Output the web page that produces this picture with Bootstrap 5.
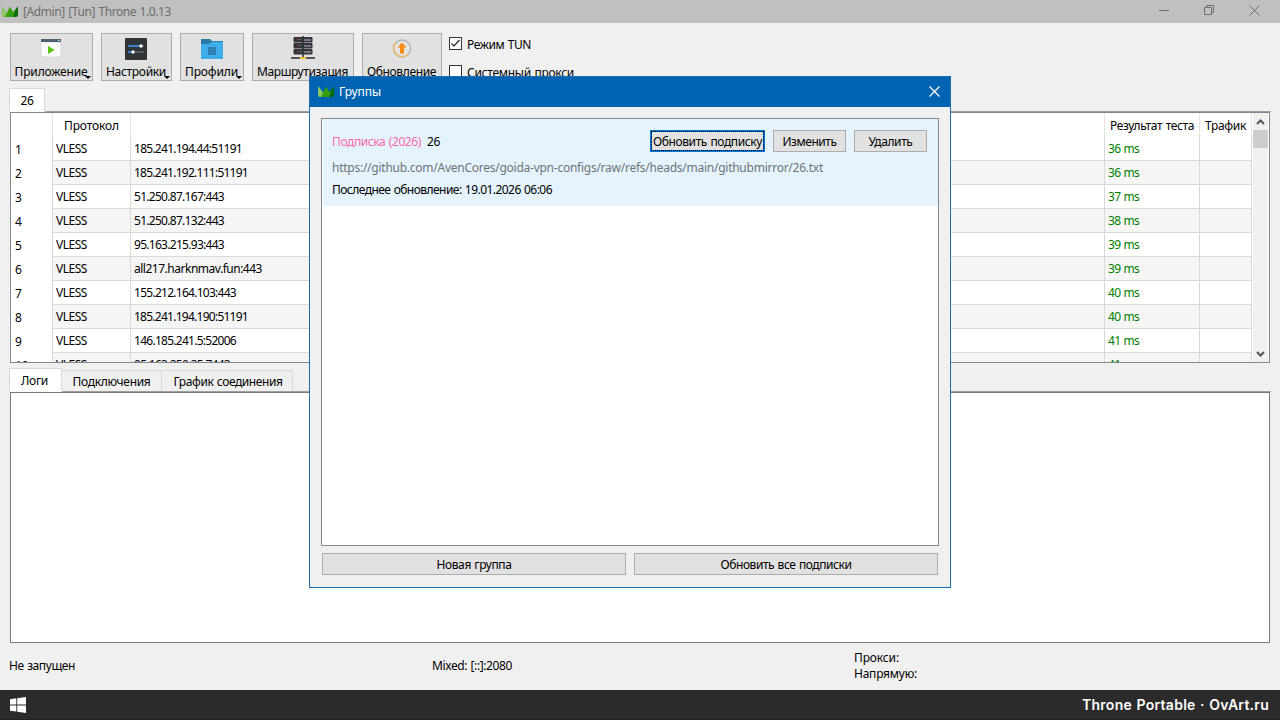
<!DOCTYPE html>
<html lang="ru">
  <head>
    <meta charset="UTF-8" />
    <meta name="viewport" content="width=device-width, initial-scale=1.0" />
    <title>Throne 1.0.13</title>
    <link
      href="https://cdn.jsdelivr.net/npm/bootstrap@5.3.0/dist/css/bootstrap.min.css"
      rel="stylesheet"
    />
    <style>
      body {
        width: 1280px;
        height: 720px;
        overflow: hidden;
        background: #f0f0f0;
        color: #000;
        font: 12px/16px "Noto Sans", "Open Sans", sans-serif;
        word-spacing: 0.7px;
      }
      svg { display: block; flex: none; }
      [data-w] { display: inline-block; white-space: nowrap; }

      .title-bar { height: 23px; background: #c0c0c0; color: #6d6d6d; padding-left: 2px; }
      .title-bar .caption { margin-left: 5px; }
      .win-btns { gap: 34px; padding: 0 20px 2px 0; }

      .tools { height: 65px; padding: 10px 10px 0; gap: 8px; }
      .tool-btn, .flat-btn {
        background: #e1e1e1;
        border: 1px solid #adadad;
        border-radius: 0;
        color: #000;
        padding: 0;
        font-size: 12px;
        line-height: 16px;
        word-spacing: inherit;
      }
      .tool-btn { height: 48px; position: relative; padding: 1px 1px 0 0; }
      .tool-btn svg { margin: 0 auto 4px; }
      .tool-btn.has-menu::after {
        content: "";
        position: absolute;
        right: 1px;
        bottom: 1px;
        border: 3px solid transparent;
        border-top-color: #000;
        border-bottom: 0;
      }
      .w-app { width: 83px; }
      .w-set { width: 71px; }
      .w-prof { width: 64px; }
      .w-route { width: 102px; }
      .w-upd { width: 80px; }
      .checks { padding-top: 4px; margin-left: -1px; gap: 12px; }
      .check-row { height: 16px; gap: 5px; }
      .box { width: 13px; height: 13px; border: 1px solid #333; background: #fff; margin-top: -3px; }

      .tab-top { width: 36px; height: 23px; margin-left: 9px; background: #fff; border: 1px solid #d9d9d9; border-bottom: 0; padding-top: 4px; }
      .rule-top { height: 1px; margin: 0 9px 0 45px; background: #a0a0a0; }
      .rule-wrap { background: linear-gradient(#fff, #fff) 10px 0 / 34px 1px no-repeat; }

      .grid-frame { margin: 0 10px; height: 251px; border: 1px solid #828790; background: #fff; overflow: hidden; }
      .grid-head { height: 24px; line-height: 25px; }
      .grid-head > div, .grid-line > div { border-right: 1px solid #d9d9d9; }
      .grid-head > div { border-color: #e5e5e5; text-align: center; }
      .grid-line { height: 24px; line-height: 24px; }
      .grid-line > div { border-bottom: 1px solid #d9d9d9; padding-left: 3px; height: 24px; overflow: hidden; }
      .grid-line [data-w], .grid-head [data-w] { line-height: inherit; vertical-align: top; }
      .grid-line:nth-child(even) > div { background: #f5f5f5; }
      .grid-line > .c-num, .grid-line:nth-child(even) > .c-num { background: #fff; border-bottom: 0; line-height: 26px; padding-left: 4px; }
      .c-num { width: 42px; }
      .c-proto { width: 78px; }
      .c-addr { width: 974px; }
      .c-res { width: 95px; }
      .c-traf { width: 52px; }
      .ms { color: #008000; }
      .scroll-bar { width: 15px; margin-left: auto; background: #f0f0f0; margin-right: 1px; }
      .thumb { height: 18px; background: #cdcdcd; }

      .log-tabs { height: 28px; padding-left: 9px; align-items: flex-end; }
      .log-tab { height: 21px; border: 1px solid #d9d9d9; border-left: 0; border-bottom: 0; background: #f0f0f0; text-align: center; padding-top: 3px; }
      .log-tab.current { width: 53px; height: 23px; background: #fff; border-left: 1px solid #d9d9d9; padding: 4px 2px 0 0; }
      .log-wrap { background: linear-gradient(#fff, #fff) 10px 0 / 51px 1px no-repeat; }
      .log-rule { height: 1px; margin: 0 9px 0 62px; background: #a0a0a0; }
      .w-conn { width: 100px; }
      .w-graph { width: 131px; padding-left: 2px; }
      .log-panel { margin: 0 10px; height: 251px; border: 1px solid #7a7a7a; background: #fff; }

      .status { height: 47px; padding: 0 0 2px 9px; }
      .status > div { width: 422px; }
      .status .mid, .status .traffic { padding-left: 1px; }

      .task-bar { height: 30px; background: #2b2b2b; border-bottom: 1px solid #241f24; padding: 0 11px 0 10px; color: #fff; }
      .sign { font: 600 14px/20px Inter, sans-serif; }

      .dialog-win { position: absolute; left: 309px; top: 76px; width: 642px; height: 512px; border: 1px solid #1a6fb0; background: #f0f0f0; }
      .dialog-title { height: 30px; background: #0063b1; color: #fff; padding: 0 10px 1px 8px; }
      .dialog-title .caption { margin-left: 5px; padding-top: 1px; }
      .group-list { margin: 11px 11px 0; height: 428px; border: 1px solid #828790; background: #fff; }
      .group-item { height: 87px; background: #e5f3ff; margin: 0 0 0 1px; padding: 11px 11px 0 9px; }
      .group-name { padding: 1px 0 0 6px; }
      .flat-btn { height: 22px; width: 73px; }
      .flat-btn [data-w] { line-height: 20px; vertical-align: top; padding-top: 1px; }
      .flat-btn.focused { width: 115px; border: 2px solid #0078d7; outline: 1px dotted #000; outline-offset: -2px; }
      .flat-btn.focused [data-w] { line-height: 18px; }
      .dialog-foot { margin: 7px 12px 0; }
      .pink { color: #ff69a5; padding-top: 1px; }
      .url { color: #6f7478; margin-top: 8px; }
      .updated { margin-top: 6px; }
    </style>
  </head>
  <body class="d-flex flex-column">
    <svg width="0" height="0" class="position-absolute">
      <symbol id="crown" viewBox="0 0 16 11">
        <path fill="#8ac763" d="M0 0 6.500 8 6 11H2Q0 11 0 9z" />
        <path fill="#0b6a0b" d="M16 0v9q0 2-2 2h-4L11 7z" />
        <path fill="#36a009" d="M3 11 8 .5 11 6l2.500-2.500L11 11z" />
      </symbol>
    </svg>

    <header class="title-bar d-flex align-items-center">
      <svg width="16" height="11"><use href="#crown" /></svg>
      <span class="caption" data-w="148">[Admin] [Tun] Throne 1.0.13</span>
      <div class="win-btns d-flex ms-auto align-items-center">
        <svg width="11" height="11" stroke="#6d6d6d"><path d="M0 5.500h10" /></svg>
        <svg width="11" height="11" fill="none" stroke="#6d6d6d"><path d="M.5 2.500h7v7h-7zM2.500 2.500v-2h7v7h-2" /></svg>
        <svg width="11" height="11" stroke="#6d6d6d"><path d="M.5.5l10 10M10.500.5l-10 10" /></svg>
      </div>
    </header>

    <div class="tools d-flex">
      <button class="tool-btn has-menu w-app">
        <svg width="24" height="24" viewBox="0 0 24 24">
          <path fill="#fafafa" stroke="#ccc" stroke-width=".6" d="M2 6h20v15H2z" />
          <path fill="#4b6270" d="M2 3h20v3H2z" />
          <path fill="#9ddcf0" d="M19 4h2v1h-2z" />
          <path fill="#5cc40d" d="M9 10l6.500 4L9 18z" />
        </svg>
        <span data-w="73">Приложение</span>
      </button>
      <button class="tool-btn has-menu w-set">
        <svg width="24" height="24" viewBox="0 0 24 24">
          <rect x="1" y="2" width="22" height="22" rx="1" fill="#30353a" />
          <path stroke="#555b60" stroke-width="2" d="M4 10h16M4 16h16" />
          <path stroke="#3b80c9" stroke-width="2" d="M4 10h12M4 16h4" />
          <circle cx="17" cy="10" r="1.700" fill="#fff" /><circle cx="9" cy="16" r="1.700" fill="#fff" />
        </svg>
        <span data-w="60">Настройки</span>
      </button>
      <button class="tool-btn has-menu w-prof">
        <svg width="24" height="24" viewBox="0 0 24 24">
          <path fill="#2a7ba6" d="M1 3h9l2 2h11v6H1z" />
          <path fill="#3daee9" d="M1 8h8l3-2h11v17H1z" />
          <path fill="#2b7ca8" d="M8 11h8v8H8z" />
          <path stroke="#3392c4" stroke-width=".5" d="M10.500 11v8M13.500 11v8M8 13.500h8M8 16.500h8" />
        </svg>
        <span data-w="53">Профили</span>
      </button>
      <button class="tool-btn w-route">
        <svg width="26" height="24" viewBox="0 0 26 24">
          <path fill="#55555d" d="M12 0h2v22h-2z" />
          <path fill="#33343b" d="M3.500 2q0-1 1-1h17q1 0 1 1v3.500q0 1-1 1h-17q-1 0-1-1zM3.500 8q0-1 1-1h17q1 0 1 1v3.500q0 1-1 1h-17q-1 0-1-1zM3.500 14q0-1 1-1h17q1 0 1 1v3.500q0 1-1 1h-17q-1 0-1-1z" />
          <path stroke="#777783" stroke-width="2" d="M14 4h7M14 10h7M14 16h7" />
          <path stroke="#a33b55" d="M7 3.500h2M7 9.500h2M7 15.500h2" />
          <path stroke="#5a9b62" d="M10 3.500h1M10 9.500h1M10 15.500h1" />
          <path stroke="#55555d" stroke-width="2" d="M1 22h24" />
          <path fill="#efbd25" d="M10 21h6v2h-6z" />
        </svg>
        <span data-w="91">Маршрутизация</span>
      </button>
      <button class="tool-btn w-upd">
        <svg width="24" height="24" viewBox="0 0 24 24">
          <circle cx="12" cy="12.500" r="8.500" fill="#e4e4e4" stroke="#b3b3b3" stroke-width="1.400" />
          <path fill="none" stroke="#f5b75f" stroke-width="1.400" d="M6 6.500A8.500 8.500 0 0 0 18 18.500" />
          <path fill="#fb8c13" d="M12 6.500l4.500 5H14v6h-4v-6H7.500z" />
        </svg>
        <span data-w="69">Обновление</span>
      </button>
      <div class="checks d-flex flex-column">
        <div class="check-row d-flex align-items-center">
          <svg class="box" viewBox="0 0 11 11" fill="none" stroke="#222" stroke-width="1.200"><path d="M1.500 5.500 4 8l5.500-6" /></svg>
          <span data-w="64">Режим TUN</span>
        </div>
        <div class="check-row d-flex align-items-center">
          <svg class="box" viewBox="0 0 11 11"></svg>
          <span data-w="107">Системный прокси</span>
        </div>
      </div>
    </div>

    <div class="tab-top text-center"><span data-w="13">26</span></div>
    <div class="rule-wrap"><div class="rule-top"></div></div>

    <div class="grid-frame d-flex">
      <div>
        <div class="grid-head d-flex">
          <div class="c-num"></div>
          <div class="c-proto"><span data-w="55">Протокол</span></div>
          <div class="c-addr"></div>
          <div class="c-res"><span data-w="84">Результат теста</span></div>
          <div class="c-traf"><span data-w="41">Трафик</span></div>
        </div>
        <div id="profiles"></div>
      </div>
      <div class="scroll-bar d-flex flex-column justify-content-between">
        <div>
          <svg width="15" height="17" fill="none" stroke="#555" stroke-width="2"><path d="M4 11l3.500-3.500L11 11" /></svg>
          <div class="thumb"></div>
        </div>
        <svg width="15" height="17" fill="none" stroke="#555" stroke-width="2"><path d="M4 7l3.500 3.500L11 7" /></svg>
      </div>
    </div>

    <div class="log-tabs d-flex">
      <div class="log-tab current"><span data-w="27">Логи</span></div>
      <div class="log-tab w-conn"><span data-w="78">Подключения</span></div>
      <div class="log-tab w-graph"><span data-w="109">График соединения</span></div>
    </div>
    <div class="log-wrap"><div class="log-rule"></div></div>
    <div class="log-panel"></div>

    <footer class="status d-flex align-items-center">
      <div><span data-w="66">Не запущен</span></div>
      <div class="mid"><span data-w="80">Mixed: [::]:2080</span></div>
      <div class="traffic">
        <span data-w="45">Прокси:</span><br />
        <span data-w="63">Напрямую:</span>
      </div>
    </footer>

    <div class="task-bar d-flex align-items-center justify-content-between">
      <svg width="16" height="16" fill="#fff"><path d="M0 2.200 6.300 1.300V7.500H0zM7.200 1.200 16 0v7.500H7.200zM0 8.400h6.300v6.200L0 13.800zM7.200 8.400H16V16l-8.800-1.200z" /></svg>
      <span class="sign" data-w="187">Throne Portable · OvArt.ru</span>
    </div>

    <section class="dialog-win">
      <div class="dialog-title d-flex align-items-center">
        <svg width="16" height="11"><use href="#crown" /></svg>
        <span class="caption" data-w="42">Группы</span>
        <svg class="ms-auto" width="11" height="11" stroke="#fff" stroke-width="1.200"><path d="M.5.5l10 10M10.500.5l-10 10" /></svg>
      </div>
      <div class="group-list">
        <div class="group-item">
          <div class="d-flex align-items-center">
            <span class="pink" data-w="89">Подписка (2026)</span>
            <span class="group-name" data-w="13">26</span>
            <div class="d-flex gap-2 ms-auto">
              <button class="flat-btn focused"><span data-w="109">Обновить подписку</span></button>
              <button class="flat-btn"><span data-w="54">Изменить</span></button>
              <button class="flat-btn"><span data-w="44">Удалить</span></button>
            </div>
          </div>
          <div class="url"><span data-w="491">https://github.com/AvenCores/goida-vpn-configs/raw/refs/heads/main/githubmirror/26.txt</span></div>
          <div class="updated"><span data-w="220">Последнее обновление: 19.01.2026 06:06</span></div>
        </div>
      </div>
      <div class="dialog-foot d-flex gap-2">
        <button class="flat-btn flex-fill"><span data-w="75">Новая группа</span></button>
        <button class="flat-btn flex-fill"><span data-w="131">Обновить все подписки</span></button>
      </div>
    </section>

    <script src="https://cdn.jsdelivr.net/npm/bootstrap@5.3.0/dist/js/bootstrap.bundle.min.js"></script>
    <script>
      // address, label width, ping
      const profiles = [
        ["185.241.194.44:51191", 108, 36],
        ["185.241.192.111:51191", 114, 36],
        ["51.250.87.167:443", 90, 37],
        ["51.250.87.132:443", 90, 38],
        ["95.163.215.93:443", 90, 39],
        ["all217.harknmav.fun:443", 128, 39],
        ["155.212.164.103:443", 102, 40],
        ["185.241.194.190:51191", 114, 40],
        ["146.185.241.5:52006", 102, 41],
        ["95.163.250.35:7443", 96, 41],
      ];

      document.getElementById("profiles").innerHTML = profiles
        .map(
          ([addr, width, ping], i) => `
          <div class="grid-line d-flex">
            <div class="c-num">${i + 1}</div>
            <div class="c-proto"><span data-w="31">VLESS</span></div>
            <div class="c-addr"><span data-w="${width}">${addr}</span></div>
            <div class="c-res ms"><span data-w="31">${ping} ms</span></div>
            <div class="c-traf"></div>
          </div>`
        )
        .join("");

      // tighten or loosen each label so it takes its own width
      document.querySelectorAll("[data-w]").forEach((el) => {
        const range = document.createRange();
        range.selectNodeContents(el);
        const natural = range.getBoundingClientRect().width;
        const gap = (el.dataset.w - natural) / el.textContent.length;
        el.style.letterSpacing = gap.toFixed(3) + "px";
      });
    </script>
  </body>
</html>
